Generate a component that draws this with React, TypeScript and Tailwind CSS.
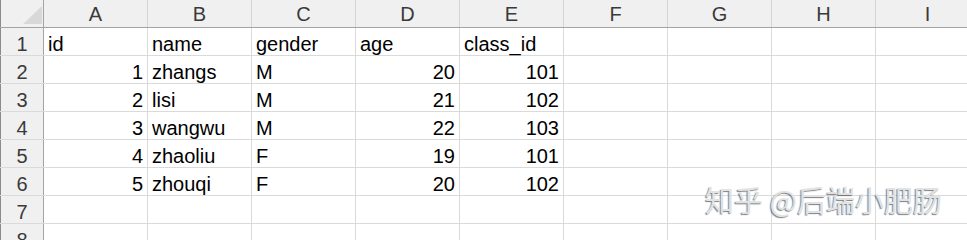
import React from "react";

const cols = ["A", "B", "C", "D", "E", "F", "G", "H", "I"];

type Cell = { v: string; num?: boolean };

const data: Cell[][] = [
  [{ v: "id" }, { v: "name" }, { v: "gender" }, { v: "age" }, { v: "class_id" }],
  [{ v: "1", num: true }, { v: "zhangs" }, { v: "M" }, { v: "20", num: true }, { v: "101", num: true }],
  [{ v: "2", num: true }, { v: "lisi" }, { v: "M" }, { v: "21", num: true }, { v: "102", num: true }],
  [{ v: "3", num: true }, { v: "wangwu" }, { v: "M" }, { v: "22", num: true }, { v: "103", num: true }],
  [{ v: "4", num: true }, { v: "zhaoliu" }, { v: "F" }, { v: "19", num: true }, { v: "101", num: true }],
  [{ v: "5", num: true }, { v: "zhouqi" }, { v: "F" }, { v: "20", num: true }, { v: "102", num: true }],
  [],
  [],
];

export default function App() {
  return (
    <div
      className="relative w-[967px] h-[240px] overflow-hidden bg-white text-black"
      style={{ fontFamily: '"Liberation Sans", Arial, sans-serif' }}
    >
      <div className="flex flex-col w-max">
        {/* header */}
        <div className="flex h-[28px] bg-[#f0f0f0] border-b border-[#a3a3a3]">
          <div className="relative w-[44px] shrink-0 border-l border-l-[#8c8c8c] border-r border-r-[#a3a3a3]">
            <svg className="absolute left-0 top-0" width="43" height="27" viewBox="0 0 43 27">
              <polygon points="41,6 41,24 22,24" fill="#d8d8d8" />
            </svg>
          </div>
          {cols.map((c) => (
            <div
              key={c}
              className="w-[104px] shrink-0 border-r border-[#d4d4d4] flex items-center justify-center text-[20px] leading-[20px] text-[#3a3a3a]"
            >
              {c}
            </div>
          ))}
        </div>
        {data.map((row, r) => (
          <div key={r} className="flex h-[28px] border-b border-[#dadada]">
            <div className="w-[44px] shrink-0 bg-[#f0f0f0] border-l border-l-[#8c8c8c] border-r border-r-[#a3a3a3] flex items-end justify-center pb-[1px] text-[20px] leading-[20px] text-[#3a3a3a]">
              {r + 1}
            </div>
            {cols.map((c, i) => {
              const cell = row[i];
              return (
                <div
                  key={c}
                  className={`w-[104px] shrink-0 border-r border-[#dadada] flex items-end pb-[1px] px-[4px] text-[20px] leading-[20px] whitespace-nowrap ${
                    cell?.num ? "justify-end" : "justify-start"
                  }`}
                >
                  {cell?.v ?? ""}
                </div>
              );
            })}
          </div>
        ))}
      </div>
      <div
        className="absolute left-[705px] top-[185px] text-[29px] leading-[29px] text-[#e2e2e2] whitespace-nowrap [text-shadow:-1px_1px_1px_rgba(0,0,0,0.5)]"
        style={{ fontFamily: '"Noto Sans CJK SC", "Noto Sans", sans-serif' }}
      >
        知乎 @后端小肥肠
      </div>
    </div>
  );
}
